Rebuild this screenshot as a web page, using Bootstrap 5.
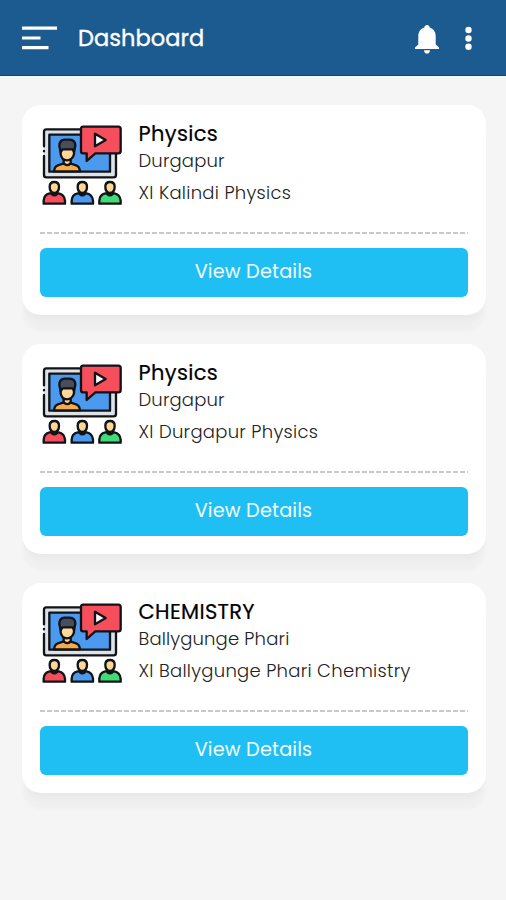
<!DOCTYPE html>
<html lang="en">
<head>
<meta charset="utf-8">
<meta name="viewport" content="width=device-width, initial-scale=1">
<title>Dashboard</title>
<link href="https://cdn.jsdelivr.net/npm/bootstrap@5.3.0/dist/css/bootstrap.min.css" rel="stylesheet">
<style>
body { background: #f5f5f5; font-family: Poppins, Inter, sans-serif; min-height: 900px; }
.topbar { height: 76px; background: #1c5b8f; border-bottom: 1px solid #0d4684; padding: 0 34px 0 22px; }
.topbar .title { font-size: 22.5px; line-height: 30px; font-weight: 400; -webkit-text-stroke: .35px #fff; letter-spacing: .05px; margin-left: 21px; }
.icon-btn { line-height: 0; }
.more-btn { margin-left: 26px; }
.course-list { padding: 29px 20px 0 22px; gap: 29px; }
.course { height: 210px; border: 0; border-radius: 19px; padding: 20px 18.5px 0 17.5px; box-shadow: 0 8px 7px -4px rgba(0,0,0,.03), 0 17px 4px -1px rgba(0,0,0,.022); }
.course-info { height: 107px; padding-left: 2.5px; gap: 16.5px; }
.course-info h2 { font-size: 21px; line-height: 26px; font-weight: 400; color: #000; -webkit-text-stroke: .2px #000; letter-spacing: .33px; margin: -4px 0 0; }
.course-info p { font-size: 18px; line-height: 26px; font-weight: 300; color: #222; letter-spacing: .28px; margin: 0; }
.course-info h2 + p { margin-top: .6px; letter-spacing: .15px; }
.course-info p + p { margin-top: 6.4px; }
.dashes { height: 2px; background: repeating-linear-gradient(90deg, #c8c8c8 0 4.6px, transparent 4.6px 7px); margin-bottom: 14px; }
.btn-details, .btn-details:hover { height: 49px; background: #20bff3; color: #f2fcff; border: 0; border-radius: 6px; font-size: 19.3px; line-height: 25px; padding: 0 0 3px; letter-spacing: .15px; }
</style>
</head>
<body>
<svg class="d-none" aria-hidden="true">
  <symbol id="class-art" viewBox="30 30 240 240">
    <g stroke="#101318" stroke-width="7" stroke-linejoin="round" stroke-linecap="round">
      <path fill="#dde2e7" stroke="none" d="M36 43H252V187H36Z"/>
      <path fill="#4b9af0" d="M52 59H234V170H52Z"/>
      <path fill="none" d="M36 94V50Q36 43 43 43H145M36 123V180Q36 187 43 187H245Q252 187 252 180V118M36 108V109"/>
      <path fill="#f8ab4a" d="M66 169Q67 152 84 149L94 146H116L126 149Q143 152 144 169Z"/>
      <path fill="#ffd18c" d="M95 130V145Q105 156 116 145V130Z"/>
      <path fill="#ffd79a" d="M86 100V118Q89 135 105 136Q122 135 126 118V100Z"/>
      <path fill="#484e5a" d="M86 111L82 93Q82 75 98 74H113Q130 75 130 92L126 111L122 103H92Z"/>
      <path fill="#f64e5b" d="M153 35H259Q266 35 266 42V108Q266 115 259 115H190L164 138V115H153Q147 115 147 108V42Q147 35 153 35Z"/>
      <path fill="#fff" d="M189 56V94L221 75Z"/>
    </g>
    <g stroke="#101318" stroke-width="7" stroke-linejoin="round">
      <path fill="#f64e5b" d="M35 266V257Q36 238 53 235H80Q97 238 99 257V266Z"/>
      <path fill="#4b9af0" d="M119 266V257Q120 238 137 235H164Q181 238 183 257V266Z"/>
      <path fill="#3fdc78" d="M202 266V257Q203 238 220 235H247Q264 238 266 257V266Z"/>
      <g fill="#ffd795">
        <path d="M59 230V237Q67 244 75 237V230M143 230V237Q151 244 159 237V230M226 230V237Q234 244 242 237V230"/>
        <path d="M53 215Q53 201 67 201T81 215Q81 232 67 234Q53 232 53 215ZM137 215Q137 201 151 201T165 215Q165 232 151 234Q137 232 137 215ZM220 215Q220 201 234 201T248 215Q248 232 234 234Q220 232 220 215Z"/>
      </g>
    </g>
  </symbol>
</svg>

<nav class="topbar d-flex align-items-center text-white">
  <a href="#" class="icon-btn" aria-label="Menu">
    <svg width="35" height="24" viewBox="0 0 35 24" fill="#fff"><path d="M0 .5H35V3.8H0ZM0 10.4H18.5V13.6H0ZM0 20H26.5V23.3H0Z"/></svg>
  </a>
  <span class="title">Dashboard</span>
  <a href="#" class="icon-btn ms-auto pt-1" aria-label="Notifications">
    <svg width="24" height="29" viewBox="0 0 24 29" fill="#fff"><path d="M12 0C13.5 0 14.6 1.1 14.6 2.6C18.2 3.7 20.7 6.8 20.7 11V19.4L24 22.5V24H0V22.5L3.3 19.4V11C3.3 6.8 5.8 3.7 9.4 2.6C9.4 1.1 10.5 0 12 0ZM9 25.2H15C15 27.2 13.7 28.6 12 28.6S9 27.2 9 25.2Z"/></svg>
  </a>
  <a href="#" class="icon-btn more-btn" aria-label="More">
    <svg width="7" height="24" viewBox="0 0 7 24" fill="#fff"><circle cx="3.5" cy="4" r="3.2"/><circle cx="3.5" cy="12.5" r="3.2"/><circle cx="3.5" cy="20.8" r="3.2"/></svg>
  </a>
</nav>

<main class="course-list d-flex flex-column">
  <section class="card course">
    <div class="course-info d-flex">
      <svg width="80" height="80" class="flex-shrink-0"><use href="#class-art"/></svg>
      <div><h2>Physics</h2><p>Durgapur</p><p>XI Kalindi Physics</p></div>
    </div>
    <div class="dashes"></div>
    <button class="btn btn-details w-100">View Details</button>
  </section>
  <section class="card course">
    <div class="course-info d-flex">
      <svg width="80" height="80" class="flex-shrink-0"><use href="#class-art"/></svg>
      <div><h2>Physics</h2><p>Durgapur</p><p>XI Durgapur Physics</p></div>
    </div>
    <div class="dashes"></div>
    <button class="btn btn-details w-100">View Details</button>
  </section>
  <section class="card course">
    <div class="course-info d-flex">
      <svg width="80" height="80" class="flex-shrink-0"><use href="#class-art"/></svg>
      <div><h2>CHEMISTRY</h2><p>Ballygunge Phari</p><p>XI Ballygunge Phari Chemistry</p></div>
    </div>
    <div class="dashes"></div>
    <button class="btn btn-details w-100">View Details</button>
  </section>
</main>
<script src="https://cdn.jsdelivr.net/npm/bootstrap@5.3.0/dist/js/bootstrap.bundle.min.js"></script>
</body>
</html>
